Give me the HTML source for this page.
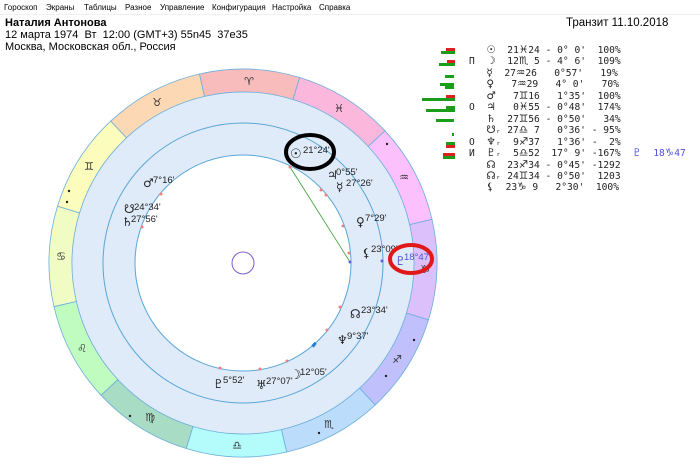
<!DOCTYPE html>
<html><head><meta charset="utf-8"><style>
body{margin:0;width:700px;height:472px;background:#fff;overflow:hidden;position:relative;font-family:"Liberation Sans","DejaVu Sans",sans-serif;}
.menu{position:absolute;left:0;top:0;width:700px;height:14px;background:#fff;border-bottom:1px solid #f0f0f0;font-size:8px;color:#000;}
.menu span{position:absolute;top:3px;}
.hd{position:absolute;font-size:11px;color:#000;white-space:nowrap}
pre{position:absolute;left:469px;top:45px;margin:0;font-family:"DejaVu Sans Mono","DejaVu Sans",monospace;font-size:9.6px;line-height:11.45px;color:#222;}
pre i{font-style:normal;font-family:"DejaVu Sans",sans-serif;font-size:10.5px;}
.b{position:absolute;height:3px}
.g{background:#1a9e1a}.r{background:#e02020}
.gl{font-family:"DejaVu Sans",sans-serif;font-size:12px;}
</style></head><body>
<div class="menu"><span style="left:4px">Гороскоп</span><span style="left:46px">Экраны</span><span style="left:84px">Таблицы</span><span style="left:125px">Разное</span><span style="left:160px">Управление</span><span style="left:212px">Конфигурация</span><span style="left:272px">Настройка</span><span style="left:319px">Справка</span></div>
<div class="hd" style="left:5px;top:17px;font-weight:bold">Наталия Антонова</div>
<div class="hd" style="left:5px;top:29px">12 марта 1974&nbsp; Вт&nbsp; 12:00 (GMT+3) 55n45&nbsp; 37e35</div>
<div class="hd" style="left:5px;top:41px">Москва, Московская обл., Россия</div>
<div class="hd" style="left:566px;top:17px;font-size:11.5px">Транзит 11.10.2018</div>

<svg width="700" height="472" style="position:absolute;left:0;top:0" font-family="DejaVu Sans,sans-serif">
<circle cx="243" cy="263" r="171" fill="#dfebf8"/>
<g stroke="#6aaedc" stroke-width="0.8">
<path d="M299.7,77.5 A194,194 0 0 0 199.4,74 L204.5,96.4 A171,171 0 0 1 293,99.5Z" fill="#f8bcbc"/>
<path d="M199.4,74 A194,194 0 0 0 110.7,121.1 L126.4,137.9 A171,171 0 0 1 204.5,96.4Z" fill="#fcd8b4"/>
<path d="M110.7,121.1 A194,194 0 0 0 57.5,206.3 L79.5,213 A171,171 0 0 1 126.4,137.9Z" fill="#fcfcbc"/>
<path d="M57.5,206.3 A194,194 0 0 0 54,306.7 L76.4,301.5 A171,171 0 0 1 79.5,213Z" fill="#f0fcc4"/>
<path d="M54,306.7 A194,194 0 0 0 101.1,395.3 L117.9,379.6 A171,171 0 0 1 76.4,301.5Z" fill="#c0fcc0"/>
<path d="M101.1,395.3 A194,194 0 0 0 186.3,448.5 L193,426.5 A171,171 0 0 1 117.9,379.6Z" fill="#a8dcc4"/>
<path d="M186.3,448.5 A194,194 0 0 0 286.7,452 L281.5,429.6 A171,171 0 0 1 193,426.5Z" fill="#b4fcfc"/>
<path d="M286.7,452 A194,194 0 0 0 375.3,404.9 L359.6,388.1 A171,171 0 0 1 281.5,429.6Z" fill="#bcdcfc"/>
<path d="M375.3,404.9 A194,194 0 0 0 428.5,319.7 L406.5,313 A171,171 0 0 1 359.6,388.1Z" fill="#c0c0fc"/>
<path d="M428.5,319.7 A194,194 0 0 0 432,219.3 L409.6,224.5 A171,171 0 0 1 406.5,313Z" fill="#dcc0fc"/>
<path d="M432,219.3 A194,194 0 0 0 384.9,130.7 L368.1,146.4 A171,171 0 0 1 409.6,224.5Z" fill="#fcc0fc"/>
<path d="M384.9,130.7 A194,194 0 0 0 299.7,77.5 L293,99.5 A171,171 0 0 1 368.1,146.4Z" fill="#fcb8dc"/>
</g>
<circle cx="243" cy="263" r="140" fill="none" stroke="#5aa6d8" stroke-width="1"/>
<circle cx="243" cy="263" r="108" fill="#fff" stroke="#5aa6d8" stroke-width="1"/>
<circle cx="243" cy="263" r="11" fill="none" stroke="#7a5ccc" stroke-width="1"/>
<line x1="290" y1="167" x2="350" y2="262" stroke="#3aa03a" stroke-width="0.8"/>
<g fill="#f08080"><circle cx="290" cy="167" r="1.5"/><circle cx="321" cy="190" r="1.5"/><circle cx="326" cy="195" r="1.5"/><circle cx="343" cy="226" r="1.5"/><circle cx="349" cy="253" r="1.5"/><circle cx="340" cy="307" r="1.5"/><circle cx="327" cy="330" r="1.5"/><circle cx="287" cy="361" r="1.5"/><circle cx="260" cy="369" r="1.5"/><circle cx="220" cy="368" r="1.5"/><circle cx="161" cy="194" r="1.5"/><circle cx="142" cy="227" r="1.5"/></g>
<circle cx="350" cy="262" r="1.5" fill="#6060e0"/><circle cx="382" cy="261" r="1.5" fill="#6060e0"/>
<rect x="313" y="342" width="3" height="5" fill="#2080d0" transform="rotate(40 314 344)"/>
<g font-size="11" fill="#333" text-anchor="middle">
<text x="249" y="85">♈&#xFE0E;</text><text x="157" y="106">♉&#xFE0E;</text><text x="89" y="170">♊&#xFE0E;</text><text x="61" y="260">♋&#xFE0E;</text><text x="82" y="352">♌&#xFE0E;</text><text x="150" y="421">♍&#xFE0E;</text><text x="237" y="449">♎&#xFE0E;</text><text x="329" y="428">♏&#xFE0E;</text><text x="397" y="363">♐&#xFE0E;</text><text x="425" y="273">♑&#xFE0E;</text><text x="404" y="181">♒&#xFE0E;</text><text x="339" y="112">♓&#xFE0E;</text>
</g>
<g fill="#222"><circle cx="387" cy="144" r="1.2"/><circle cx="414" cy="340" r="1.2"/><circle cx="386" cy="376" r="1.2"/><circle cx="319" cy="433" r="1.2"/><circle cx="130" cy="416" r="1.2"/><circle cx="69" cy="191" r="1.2"/><circle cx="67" cy="202" r="1.2"/></g>
<g font-size="9.5" fill="#222" font-family="Liberation Sans,DejaVu Sans,sans-serif">
<text x="303" y="153">21°24'</text>
<text x="336" y="175">0°55'</text>
<text x="346" y="186">27°26'</text>
<text x="365" y="221">7°29'</text>
<text x="371" y="252">23°09'</text>
<text x="361" y="313">23°34'</text>
<text x="347" y="339">9°37'</text>
<text x="300" y="375">12°05'</text>
<text x="266" y="384">27°07'</text>
<text x="223" y="383">5°52'</text>
<text x="153" y="183">7°16'</text>
<text x="134" y="210">24°34'</text>
<text x="131" y="222">27°56'</text>
<text x="404" y="260" fill="#5050d0">18°47'</text>
</g>
<g class="gl" fill="#222">
<text x="290" y="158" font-size="13">☉</text>
<text x="327" y="179">♃</text>
<text x="336" y="191">☿</text>
<text x="356" y="226">♀</text>
<text x="362" y="257" font-weight="bold">⚸</text>
<text x="350" y="318">☊</text>
<text x="337" y="344">♆</text>
<text x="290" y="379" font-size="13">☽</text>
<text x="256" y="389">♅</text>
<text x="213" y="388">♇</text>
<text x="143" y="187">♂</text>
<text x="124" y="213">☋</text>
<text x="122" y="226">♄</text>
<text x="395" y="265" fill="#5050d0">♇</text>
</g>
<ellipse cx="310" cy="152" rx="24" ry="17" fill="none" stroke="#000" stroke-width="4"/>
<ellipse cx="411" cy="259" rx="21" ry="14" fill="none" stroke="#e01818" stroke-width="4"/>
</svg>

<div class="b r" style="left:446px;top:48px;width:9px"></div><div class="b g" style="left:441px;top:51px;width:14px"></div>
<div class="b r" style="left:447px;top:60px;width:8px"></div><div class="b g" style="left:439px;top:63px;width:16px"></div>
<div class="b g" style="left:445px;top:75px;width:9px"></div>
<div class="b g" style="left:440px;top:83px;width:14px"></div><div class="b g" style="left:445px;top:86px;width:9px"></div>
<div class="b r" style="left:446px;top:95px;width:9px"></div><div class="b g" style="left:422px;top:98px;width:33px"></div>
<div class="b g" style="left:446px;top:106px;width:9px"></div><div class="b g" style="left:426px;top:109px;width:29px"></div>
<div class="b g" style="left:436px;top:119px;width:18px"></div>
<div class="b g" style="left:452px;top:133px;width:2px"></div>
<div class="b g" style="left:446px;top:142px;width:9px"></div><div class="b r" style="left:446px;top:145px;width:9px"></div>
<div class="b r" style="left:443px;top:153px;width:12px"></div><div class="b g" style="left:443px;top:156px;width:12px"></div>
<pre>
   <i>☉</i>  21<i>♓</i>24 - 0° 0'  100%
П  <i>☽</i>  12<i>♏</i> 5 - 4° 6'  109%
   <i>☿</i>  27<i>♒</i>26   0°57'   19%
   <i>♀</i>   7<i>♒</i>29   4° 0'   70%
   <i>♂</i>   7<i>♊</i>16   1°35'  100%
O  <i>♃</i>   0<i>♓</i>55 - 0°48'  174%
   <i>♄</i>  27<i>♊</i>56 - 0°50'   34%
   <i>☋</i>ᵣ 27<i>♎</i> 7   0°36' - 95%
O  <i>♆</i>ᵣ  9<i>♐</i>37   1°36' -  2%
И  <i>♇</i>ᵣ  5<i>♎</i>52  17° 9' -167%  <span style="color:#5050e0"><i>♇</i>  18<i>♑</i>47</span>
   <i>☊</i>  23<i>♐</i>34 - 0°45' -1292
   <i>☊</i>ᵣ 24<i>♊</i>34 - 0°50'  1203
   <i>⚸</i>  23<i>♑</i> 9   2°30'  100%</pre>
</body></html>
